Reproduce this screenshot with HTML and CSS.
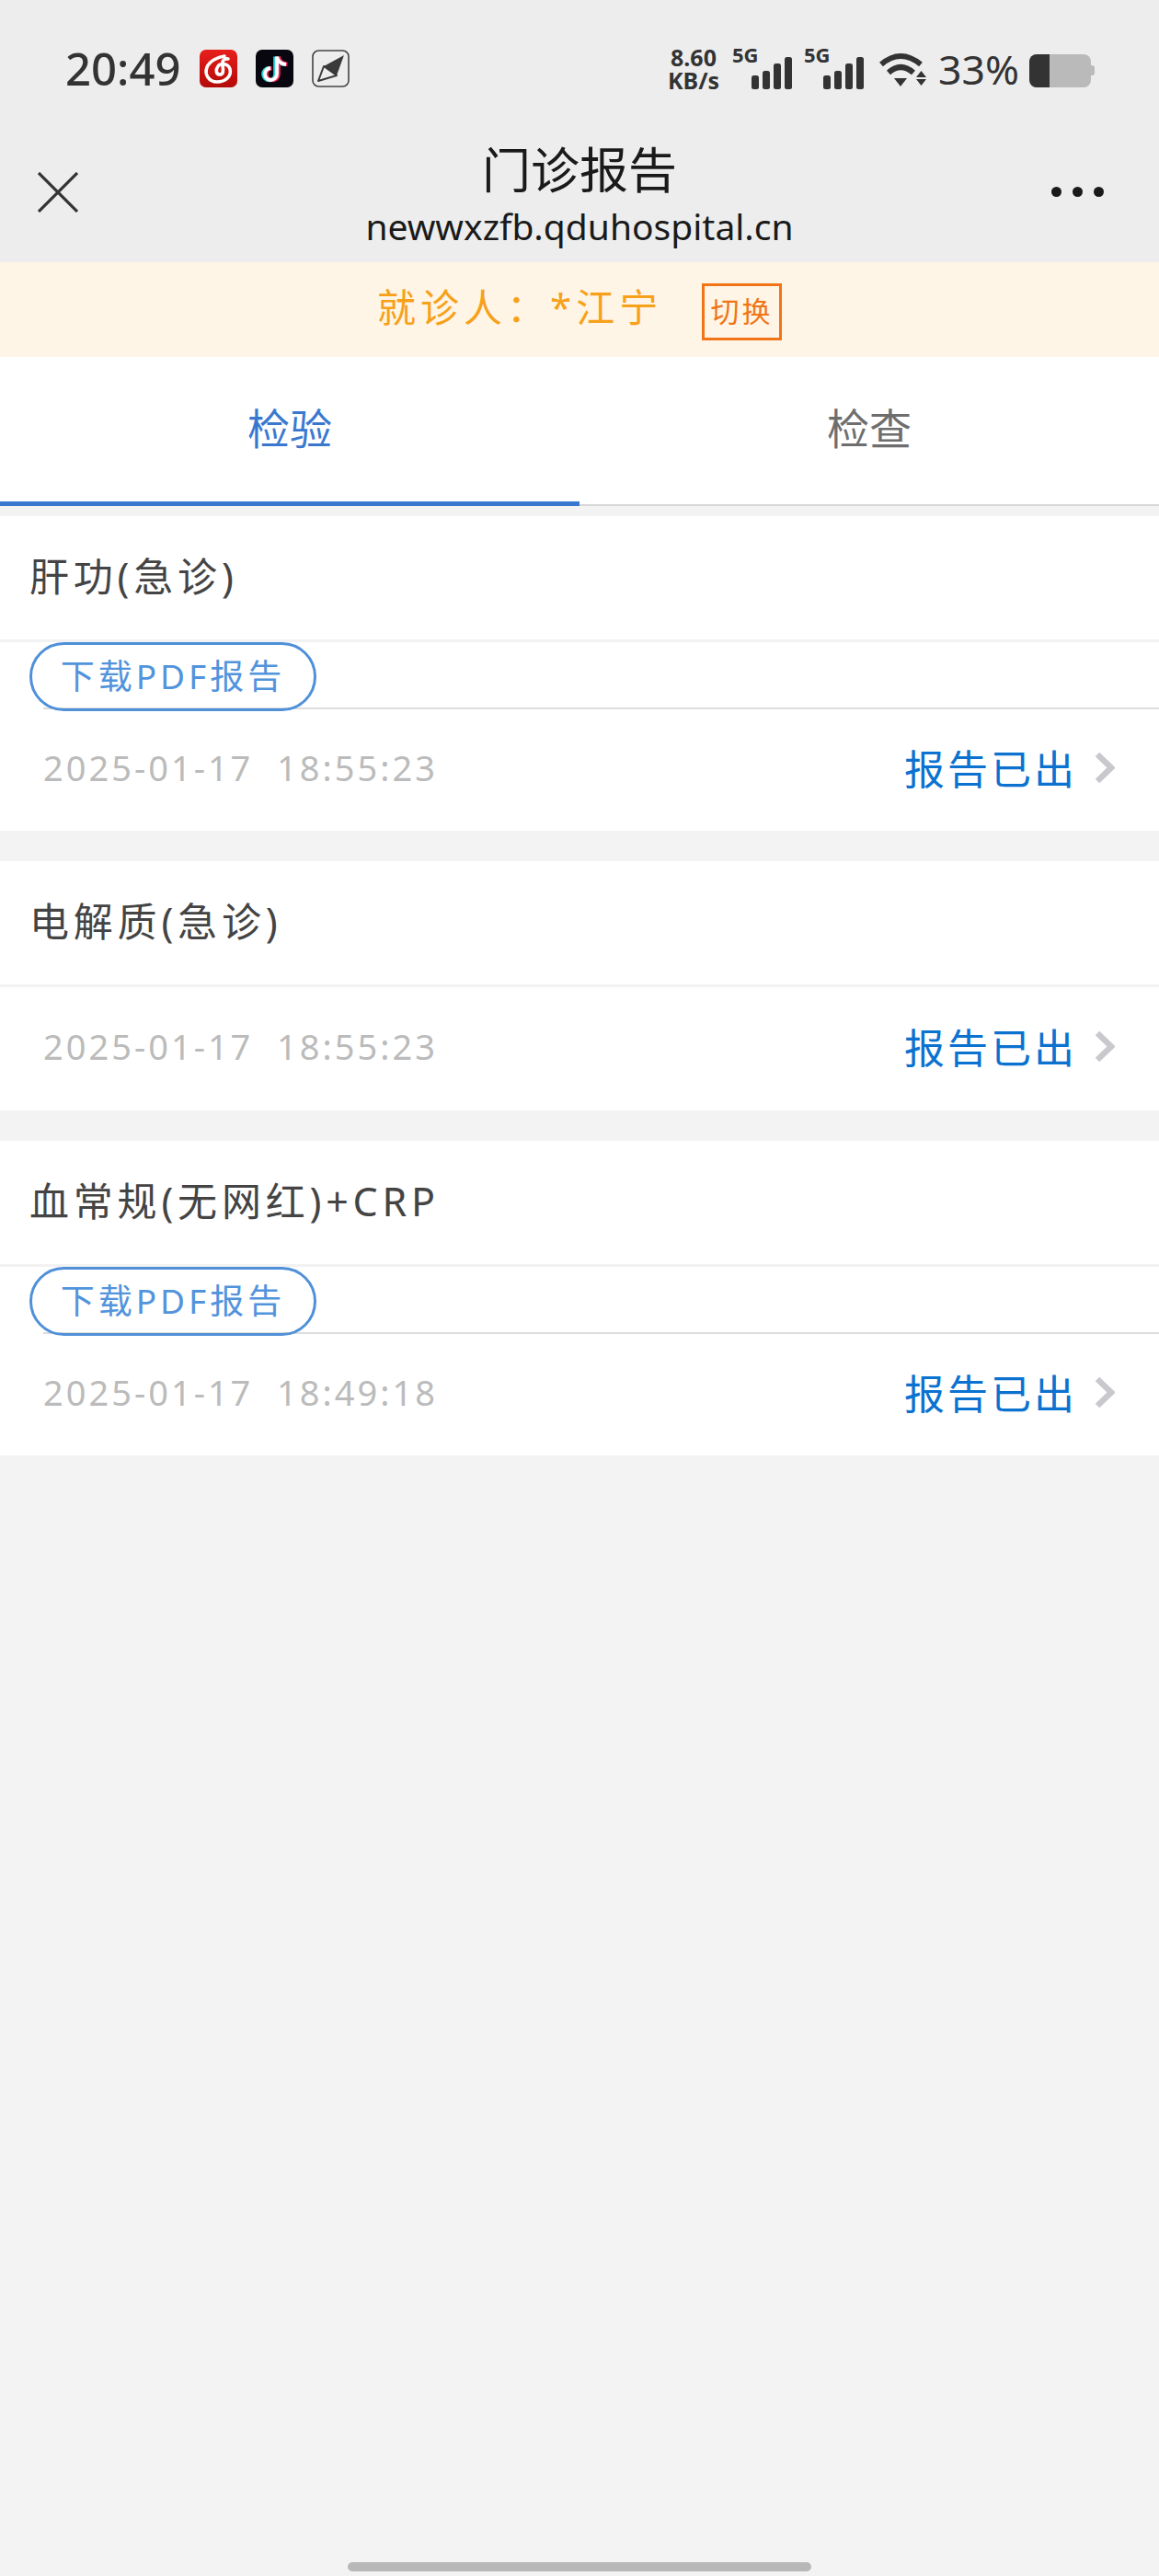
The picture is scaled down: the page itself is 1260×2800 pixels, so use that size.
FILE: index.html
```html
<!DOCTYPE html>
<html lang="zh-CN">
<head>
  <meta charset="UTF-8" />
  <meta name="viewport" content="width=device-width, initial-scale=1" />
  <title>门诊报告</title>
  <link rel="stylesheet" href="styles.css">
</head>
<body>
  <div class="page">
    <header class="top">
      <div class="status-bar">
        <div class="status-left">
          <span class="clock">20:49</span>
          <svg class="app-icon" viewBox="0 0 41 41">
            <defs>
              <linearGradient id="neteaseRed" x1="0" y1="0" x2="0" y2="1">
                <stop offset="0" stop-color="#e8201c" />
                <stop offset="1" stop-color="#b30a08" />
              </linearGradient>
            </defs>
            <rect width="41" height="41" rx="7" fill="url(#neteaseRed)" />
            <path d="M27 7C20 8 11 12 8 19C5 27 10 35 19 35C28 35 35 29 33 21C31 15 23 14 20 18C17 22 18 27 22 27C26 27 26 22 25 18C24 13 26 9 31 10" fill="none" stroke="#fff" stroke-width="3.600" stroke-linecap="round" />
          </svg>
          <svg class="app-icon" viewBox="0 0 41 41">
            <rect width="41" height="41" rx="7" fill="#08070f" />
            <path d="M23 7V26A6.500 6.500 0 1 1 16 19.500M23 7C24 12 28 15 33 15.500" transform="translate(-1.500 0.500)" fill="none" stroke="#2fd6dc" stroke-width="4.600" />
            <path d="M23 7V26A6.500 6.500 0 1 1 16 19.500M23 7C24 12 28 15 33 15.500" transform="translate(1.500 0.500)" fill="none" stroke="#f0285a" stroke-width="4.600" />
            <path d="M23 7V26A6.500 6.500 0 1 1 16 19.500M23 7C24 12 28 15 33 15.500" transform="translate(0 0.500)" fill="none" stroke="#fff" stroke-width="3.800" />
          </svg>
          <svg class="app-icon" viewBox="0 0 41 41">
            <rect x="1" y="1" width="39" height="39" rx="6.500" fill="none" stroke="#444" stroke-width="1.600" />
            <path d="M35 6L27 28L13 18Z" fill="#3a3a3a" />
            <path d="M13 18L27 28L7 34Z" fill="none" stroke="#3a3a3a" stroke-width="2" stroke-linejoin="round" />
          </svg>
        </div>
        <div class="status-right">
          <div class="net-speed">8.60<br>KB/s</div>
          <div class="signal">
            <span class="signal-label">5G</span>
            <svg class="signal-bars" viewBox="0 0 44 35">
              <rect x="0" y="20" width="8" height="15" rx="2.500" />
              <rect x="12" y="15" width="8" height="20" rx="2.500" />
              <rect x="24" y="7" width="8" height="28" rx="2.500" />
              <rect x="36" y="0" width="8" height="35" rx="2.500" />
            </svg>
          </div>
          <div class="signal">
            <span class="signal-label">5G</span>
            <svg class="signal-bars" viewBox="0 0 44 35">
              <rect x="0" y="20" width="8" height="15" rx="2.500" />
              <rect x="12" y="15" width="8" height="20" rx="2.500" />
              <rect x="24" y="7" width="8" height="28" rx="2.500" />
              <rect x="36" y="0" width="8" height="35" rx="2.500" />
            </svg>
          </div>
          <svg class="wifi" viewBox="0 0 53 38">
            <path d="M3 14Q24 -4 46 14" fill="none" stroke="#333" stroke-width="6" />
            <path d="M11 23Q24 11 38 23" fill="none" stroke="#333" stroke-width="6" />
            <path d="M17 29H31L24 38Z" fill="#333" />
            <path d="M41 28H52L46.500 21Z" fill="#333" />
            <path d="M41 30H52L46.500 37Z" fill="#333" />
          </svg>
          <span class="battery-text">33%</span>
          <div class="battery"><div class="battery-level"></div></div>
        </div>
      </div>
      <nav class="nav-bar">
        <svg class="close-icon" viewBox="0 0 44 44">
          <path d="M1 1L43 43M43 1L1 43" fill="none" stroke="#333" stroke-width="3.200" />
        </svg>
        <div class="nav-title">
          <div class="title-main">门诊报告</div>
          <div class="title-url">newwxzfb.qduhospital.cn</div>
        </div>
        <div class="more-dots"><i></i><i></i><i></i></div>
      </nav>
    </header>

    <div class="patient-bar">
      <span class="patient-name">就诊人：*江宁</span>
      <span class="switch-btn">切换</span>
    </div>

    <div class="tabs">
      <div class="tab active">检验</div>
      <div class="tab">检查</div>
    </div>

    <main class="report-list">
      <article class="report-card">
        <div class="report-title">肝功(急诊)</div>
        <a class="pdf-btn">下载PDF报告</a>
        <div class="report-foot">
          <span class="report-time">2025-01-17&nbsp;&nbsp;18:55:23</span>
          <span class="report-status">报告已出<svg class="chevron" viewBox="0 0 22 35"><path d="M3 3L18 17.500L3 32" fill="none" stroke="#c9c9cd" stroke-width="6.500" /></svg></span>
        </div>
      </article>

      <article class="report-card">
        <div class="report-title">电解质(急诊)</div>
        <div class="report-foot no-btn">
          <span class="report-time">2025-01-17&nbsp;&nbsp;18:55:23</span>
          <span class="report-status">报告已出<svg class="chevron" viewBox="0 0 22 35"><path d="M3 3L18 17.500L3 32" fill="none" stroke="#c9c9cd" stroke-width="6.500" /></svg></span>
        </div>
      </article>

      <article class="report-card">
        <div class="report-title">血常规(无网红)+CRP</div>
        <a class="pdf-btn">下载PDF报告</a>
        <div class="report-foot">
          <span class="report-time">2025-01-17&nbsp;&nbsp;18:49:18</span>
          <span class="report-status">报告已出<svg class="chevron" viewBox="0 0 22 35"><path d="M3 3L18 17.500L3 32" fill="none" stroke="#c9c9cd" stroke-width="6.500" /></svg></span>
        </div>
      </article>
    </main>

    <div class="home-bar"></div>
  </div>
</body>
</html>
```

FILE: styles.css
```css
* {
  margin: 0;
  padding: 0;
  box-sizing: border-box;
}

body {
  font-family: "Noto Sans", "Noto Sans CJK SC", sans-serif;
  background-color: #f3f3f3;
  color: #333;
}

.page {
  height: 2800px;
  display: flex;
  flex-direction: column;
  overflow: hidden;
}

.top {
  height: 285px;
  background: #ededed;
  flex-shrink: 0;
}

/* status bar */
.status-bar {
  height: 150px;
  padding: 52px 74px 0 71px;
  display: flex;
  justify-content: space-between;
  align-items: flex-start;
}

.status-left {
  display: flex;
  align-items: center;
  height: 44px;
}

.clock {
  font-size: 49px;
  font-weight: 500;
  line-height: 44px;
  width: 146px;
  color: #333;
}

.app-icon {
  width: 41px;
  height: 41px;
  margin-right: 20px;
}

.status-right {
  display: flex;
  align-items: flex-start;
}

.net-speed {
  width: 58px;
  margin-right: 13px;
  margin-top: -2px;
  font-size: 25px;
  font-weight: 700;
  line-height: 25px;
  text-align: center;
  white-space: nowrap;
  color: #333;
}

.signal {
  display: flex;
  height: 45px;
  margin-right: 13px;
}

.signal-label {
  font-size: 22px;
  font-weight: 700;
  line-height: 20px;
  width: 27px;
  margin-top: -3px;
  color: #333;
}

.signal-bars {
  width: 44px;
  height: 35px;
  margin-left: -6px;
  margin-top: 10px;
  fill: #333;
}

.wifi {
  width: 53px;
  height: 38px;
  margin: 4px 12px 0 3px;
}

.battery-text {
  font-size: 44.500px;
  line-height: 46px;
  width: 99px;
  color: #333;
}

.battery {
  position: relative;
  width: 67px;
  height: 36px;
  margin-top: 7px;
  background: #bababa;
  border-radius: 8px;
}

.battery::after {
  content: "";
  position: absolute;
  right: -4px;
  top: 12px;
  width: 4px;
  height: 11px;
  background: #bababa;
  border-radius: 0 3px 3px 0;
}

.battery-level {
  width: 22px;
  height: 100%;
  background: #333;
  border-radius: 8px 0 0 8px;
}

/* nav */
.nav-bar {
  height: 135px;
  padding: 0 60px 18px 41px;
  display: flex;
  justify-content: space-between;
  align-items: center;
  position: relative;
}

.close-icon {
  width: 44px;
  height: 44px;
}

.nav-title {
  position: absolute;
  left: 0;
  right: 0;
  top: 0;
  text-align: center;
  color: #1a1a1a;
}

.title-main {
  font-size: 53px;
  line-height: 62px;
  margin-top: 4px;
}

.title-url {
  font-size: 39px;
  line-height: 48px;
  margin-top: 6px;
}

.more-dots {
  display: flex;
  gap: 12px;
}

.more-dots i {
  display: block;
  width: 11px;
  height: 11px;
  border-radius: 50%;
  background: #1a1a1a;
}

/* patient */
.patient-bar {
  height: 103px;
  flex-shrink: 0;
  background: #fff5e6;
  display: flex;
  align-items: center;
  padding-left: 410px;
}

.patient-name {
  font-size: 42px;
  letter-spacing: 5px;
  line-height: 56px;
  margin-top: -6px;
  color: #f7a11a;
  width: 353px;
}

.switch-btn {
  width: 87px;
  height: 62px;
  border: 3px solid #f07516;
  color: #f07516;
  font-size: 31px;
  letter-spacing: 3px;
  line-height: 54px;
  text-align: center;
  margin-top: 4px;
}

/* tabs */
.tabs {
  height: 162px;
  flex-shrink: 0;
  background: #fff;
  display: flex;
  border-bottom: 2px solid #d8d8d8;
}

.tab {
  flex: 1;
  height: 162px;
  font-size: 46px;
  line-height: 154px;
  text-align: center;
  color: #6e6e6e;
}

.tab.active {
  color: #3a78d0;
  border-bottom: 5px solid #3a78d0;
}

/* list */
.report-list {
  margin-top: 11px;
  display: flex;
  flex-direction: column;
  gap: 33px;
}

.report-card {
  background: #fff;
}

.report-title {
  height: 137px;
  padding-left: 32px;
  font-size: 43px;
  line-height: 132px;
  letter-spacing: 4.800px;
  color: #444;
  border-bottom: 3px solid #f2f2f2;
}

.pdf-btn {
  display: block;
  width: 312px;
  height: 75px;
  margin: 0 0 -4px 32px;
  border: 3px solid #4f90d9;
  border-radius: 38px;
  font-size: 37px;
  letter-spacing: 4px;
  line-height: 68px;
  text-align: center;
  color: #5294dc;
  position: relative;
}

.report-foot {
  height: 134px;
  margin-left: 47px;
  padding: 0 48px 6px 0;
  border-top: 2px solid #ddd;
  display: flex;
  justify-content: space-between;
  align-items: center;
}

.report-foot.no-btn {
  border-top: none;
}

.report-time {
  font-size: 38px;
  letter-spacing: 3px;
  color: #bbb;
}

.report-status {
  display: flex;
  align-items: center;
  font-size: 44px;
  letter-spacing: 3px;
  color: #0b72d0;
}

.chevron {
  width: 22px;
  height: 35px;
  margin-left: 19px;
}

/* bottom gesture bar */
.home-bar {
  width: 504px;
  height: 10px;
  margin: auto auto 5px;
  background: #b8b8b8;
  border-radius: 5px;
  flex-shrink: 0;
}
```
